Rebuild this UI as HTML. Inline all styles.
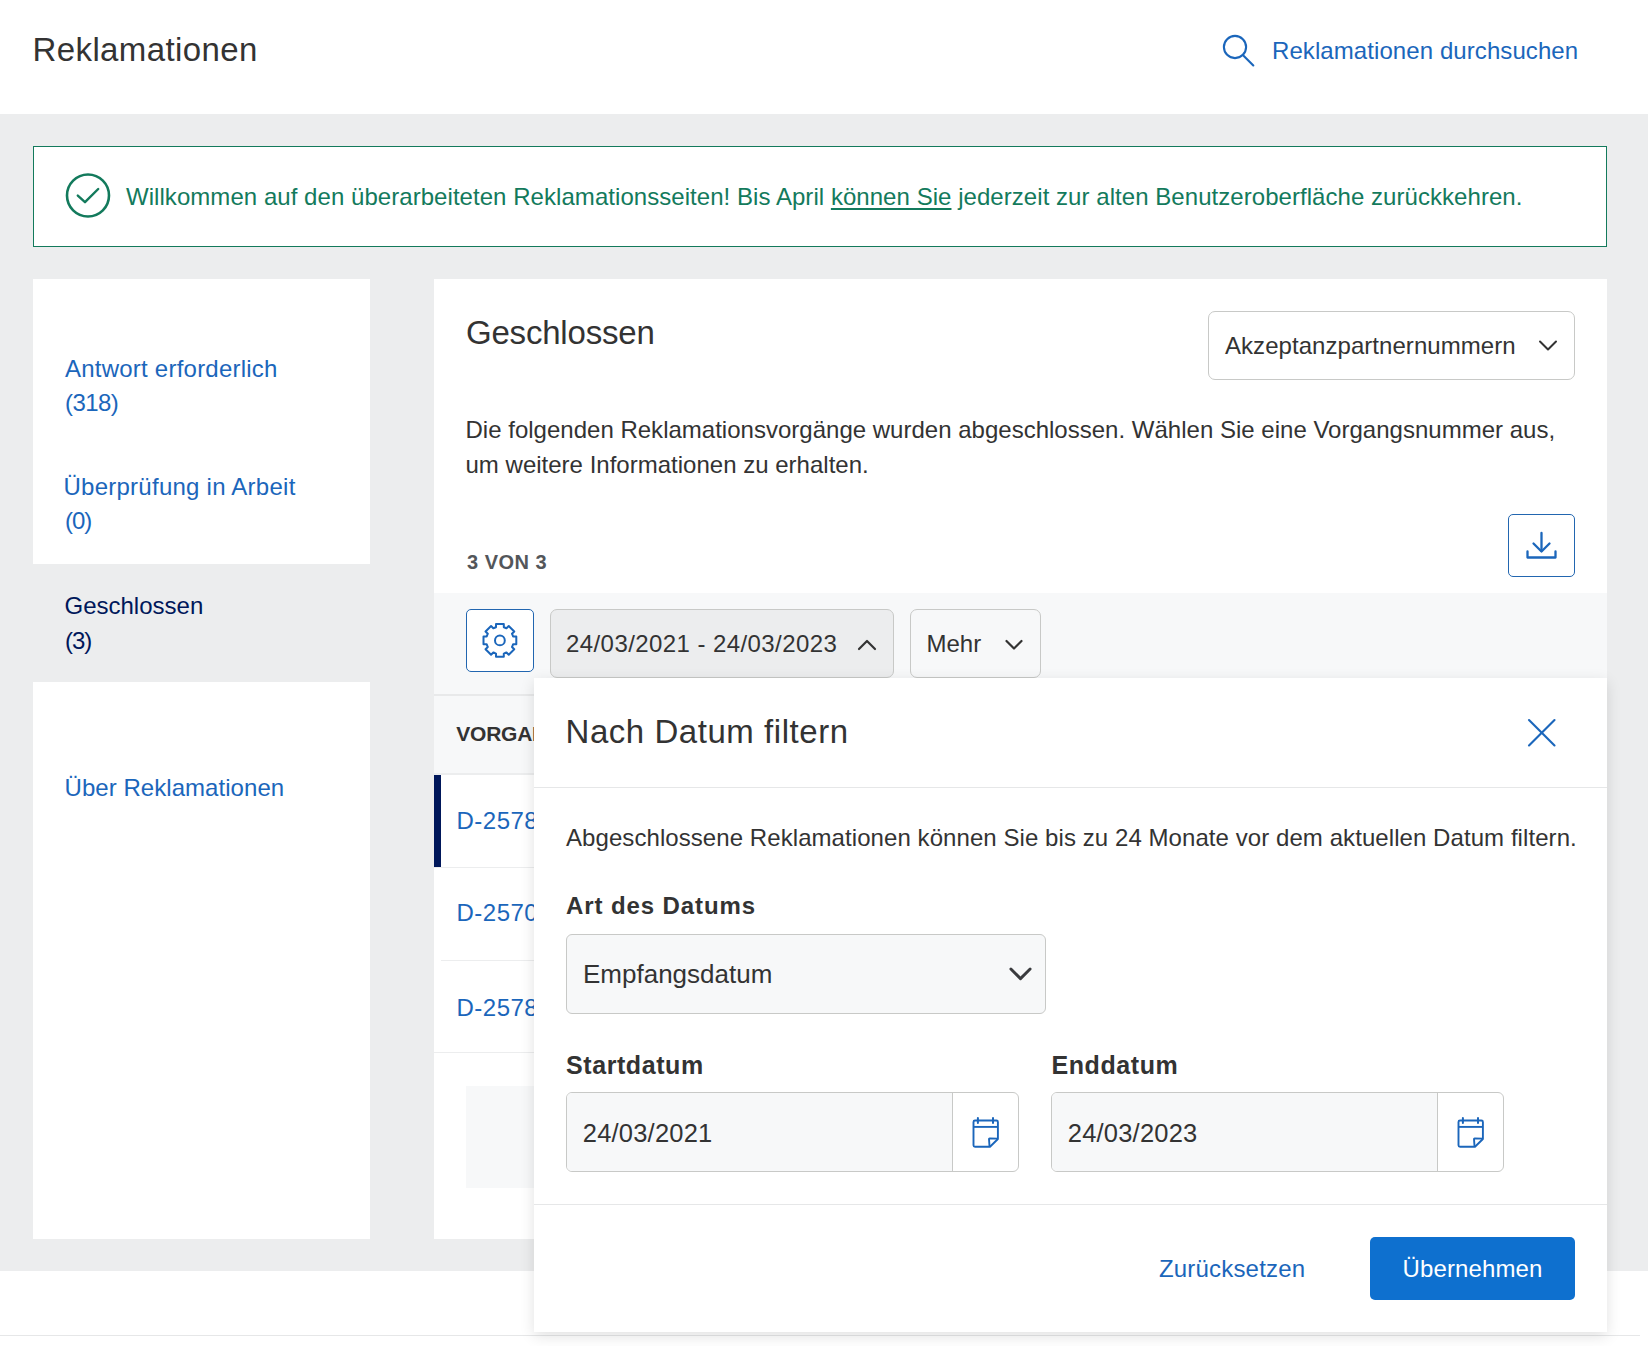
<!DOCTYPE html>
<html><head><meta charset="utf-8"><title>Reklamationen</title>
<style>
html,body{margin:0;padding:0;}
body{width:1648px;height:1346px;position:relative;overflow:hidden;background:#fff;font-family:"Liberation Sans", sans-serif;}
</style></head><body>
<div style="position:absolute;left:32.5px;top:33.07px;font-size:33px;line-height:33px;color:#333333;font-weight:400;letter-spacing:0.4px;white-space:nowrap;">Reklamationen</div>
<svg style="position:absolute;left:1210px;top:25px" width="80" height="55" viewBox="0 0 80 55"><circle cx="25" cy="22" r="11.1" fill="none" stroke="#1b66bb" stroke-width="2.1"/><line x1="32.8" y1="30" x2="43.3" y2="40.5" stroke="#1b66bb" stroke-width="2.1" stroke-linecap="round"/></svg>
<div style="position:absolute;left:1272px;top:39.18px;font-size:24px;line-height:24px;color:#1b66bb;font-weight:400;letter-spacing:0.08px;white-space:nowrap;">Reklamationen durchsuchen</div>
<div style="position:absolute;left:0px;top:114px;width:1648px;height:1157px;background:#ecedee"></div>
<div style="position:absolute;left:0px;top:1335px;width:1640px;height:1px;background:#e6e7e8"></div>
<div style="position:absolute;left:33px;top:146px;width:1574px;height:101px;background:#fff;border:1px solid #137a5c;box-sizing:border-box"></div>
<svg style="position:absolute;left:60px;top:168px" width="56" height="56" viewBox="0 0 56 56"><circle cx="28" cy="27.5" r="21" fill="none" stroke="#137a5c" stroke-width="2.6"/><polyline points="17.8,27.6 25,34.2 38.2,21" fill="none" stroke="#137a5c" stroke-width="2.4" stroke-linecap="round" stroke-linejoin="round"/></svg>
<div style="position:absolute;left:126px;top:184.68px;font-size:24px;line-height:24px;color:#137a5c;font-weight:400;letter-spacing:0.05px;white-space:nowrap;">Willkommen auf den überarbeiteten Reklamationsseiten! Bis April <span style="text-decoration:underline;text-underline-offset:3px;text-decoration-thickness:2px">können Sie</span> jederzeit zur alten Benutzeroberfläche zurückkehren.</div>
<div style="position:absolute;left:33px;top:279px;width:337px;height:285px;background:#fff"></div>
<div style="position:absolute;left:33px;top:682px;width:337px;height:557px;background:#fff"></div>
<div style="position:absolute;left:65px;top:356.88px;font-size:24px;line-height:24px;color:#1b66bb;font-weight:400;letter-spacing:0.23px;white-space:nowrap;">Antwort erforderlich</div>
<div style="position:absolute;left:65px;top:390.78px;font-size:24px;line-height:24px;color:#1b66bb;font-weight:400;letter-spacing:-0.6px;white-space:nowrap;">(318)</div>
<div style="position:absolute;left:63.5px;top:474.68px;font-size:24px;line-height:24px;color:#1b66bb;font-weight:400;letter-spacing:0.25px;white-space:nowrap;">Überprüfung in Arbeit</div>
<div style="position:absolute;left:65px;top:509.28px;font-size:24px;line-height:24px;color:#1b66bb;font-weight:400;letter-spacing:-1px;white-space:nowrap;">(0)</div>
<div style="position:absolute;left:64.5px;top:593.68px;font-size:24px;line-height:24px;color:#00175a;font-weight:400;letter-spacing:0px;white-space:nowrap;">Geschlossen</div>
<div style="position:absolute;left:65px;top:628.78px;font-size:24px;line-height:24px;color:#00175a;font-weight:400;letter-spacing:-1px;white-space:nowrap;">(3)</div>
<div style="position:absolute;left:64.5px;top:776.28px;font-size:24px;line-height:24px;color:#1b66bb;font-weight:400;letter-spacing:0.05px;white-space:nowrap;">Über Reklamationen</div>
<div style="position:absolute;left:434px;top:279px;width:1173px;height:960px;background:#fff"></div>
<div style="position:absolute;left:466px;top:316.27px;font-size:33px;line-height:33px;color:#333333;font-weight:400;letter-spacing:-0.2px;white-space:nowrap;">Geschlossen</div>
<div style="position:absolute;left:1208px;top:311px;width:367px;height:69px;border:1px solid #c8c9c7;border-radius:7px;box-sizing:border-box;background:#fff"></div>
<div style="position:absolute;left:1225px;top:333.58px;font-size:24px;line-height:24px;color:#333333;font-weight:400;letter-spacing:0.05px;white-space:nowrap;">Akzeptanzpartnernummern</div>
<svg style="position:absolute;left:1536px;top:336px" width="24" height="20" viewBox="0 0 24 20"><polyline points="4,5.5 12,13.5 20,5.5" fill="none" stroke="#333333" stroke-width="2" stroke-linecap="round" stroke-linejoin="round"/></svg>
<div style="position:absolute;left:465.5px;top:417.78px;font-size:24px;line-height:24px;color:#333333;font-weight:400;letter-spacing:0.01px;white-space:nowrap;">Die folgenden Reklamationsvorgänge wurden abgeschlossen. Wählen Sie eine Vorgangsnummer aus,</div>
<div style="position:absolute;left:465.5px;top:452.88px;font-size:24px;line-height:24px;color:#333333;font-weight:400;letter-spacing:0.01px;white-space:nowrap;">um weitere Informationen zu erhalten.</div>
<div style="position:absolute;left:467px;top:551.67px;font-size:20px;line-height:20px;color:#53565a;font-weight:700;letter-spacing:0.5px;white-space:nowrap;">3 VON 3</div>
<div style="position:absolute;left:1508px;top:514px;width:67px;height:63px;border:1.3px solid #2266b0;border-radius:5px;box-sizing:border-box;background:#fff"></div>
<svg style="position:absolute;left:1518px;top:524px" width="48" height="44" viewBox="0 0 48 44"><line x1="23.5" y1="9" x2="23.5" y2="27" stroke="#1b66bb" stroke-width="2.3" stroke-linecap="round"/><polyline points="15.5,19.5 23.5,27.5 31.5,19.5" fill="none" stroke="#1b66bb" stroke-width="2.3" stroke-linecap="round" stroke-linejoin="round"/><polyline points="9.5,27.5 9.5,33.5 37.5,33.5 37.5,27.5" fill="none" stroke="#1b66bb" stroke-width="2.3" stroke-linecap="round" stroke-linejoin="round"/></svg>
<div style="position:absolute;left:434px;top:593px;width:1173px;height:102px;background:#f7f8f9"></div>
<div style="position:absolute;left:434px;top:694px;width:1173px;height:2px;background:#e8e9ea"></div>
<div style="position:absolute;left:466px;top:609px;width:68px;height:63px;border:1.3px solid #2266b0;border-radius:5px;box-sizing:border-box;background:#fff"></div>
<svg style="position:absolute;left:476px;top:616px" width="48" height="48" viewBox="0 0 48 48"><path d="M20.00,11.20 L20.00,8.00 L27.80,8.00 L27.80,11.20 A13.76,13.76 0 0 1 30.48,12.31 L32.74,10.05 L38.25,15.56 L35.99,17.82 A13.76,13.76 0 0 1 37.10,20.50 L40.30,20.50 L40.30,28.30 L37.10,28.30 A13.76,13.76 0 0 1 35.99,30.98 L38.25,33.24 L32.74,38.75 L30.48,36.49 A13.76,13.76 0 0 1 27.80,37.60 L27.80,40.80 L20.00,40.80 L20.00,37.60 A13.76,13.76 0 0 1 17.32,36.49 L15.06,38.75 L9.55,33.24 L11.81,30.98 A13.76,13.76 0 0 1 10.70,28.30 L7.50,28.30 L7.50,20.50 L10.70,20.50 A13.76,13.76 0 0 1 11.81,17.82 L9.55,15.56 L15.06,10.05 L17.32,12.31 A13.76,13.76 0 0 1 20.00,11.20 Z" fill="none" stroke="#1b66bb" stroke-width="2" stroke-linejoin="round"/><circle cx="23.9" cy="24.4" r="4.9" fill="none" stroke="#1b66bb" stroke-width="2"/></svg>
<div style="position:absolute;left:550px;top:609px;width:344px;height:69px;border:1px solid #c8c9c7;border-radius:7px;box-sizing:border-box;background:#ecedee"></div>
<div style="position:absolute;left:566px;top:632.08px;font-size:24px;line-height:24px;color:#333333;font-weight:400;letter-spacing:0.42px;white-space:nowrap;">24/03/2021 - 24/03/2023</div>
<svg style="position:absolute;left:852px;top:632px" width="30" height="24" viewBox="0 0 30 24"><polyline points="7,17 15,9 23,17" fill="none" stroke="#333333" stroke-width="2.2" stroke-linecap="round" stroke-linejoin="round"/></svg>
<div style="position:absolute;left:910px;top:609px;width:131px;height:69px;border:1px solid #c8c9c7;border-radius:7px;box-sizing:border-box;background:#f7f8f9"></div>
<div style="position:absolute;left:926.5px;top:632.08px;font-size:24px;line-height:24px;color:#333333;font-weight:400;letter-spacing:0px;white-space:nowrap;">Mehr</div>
<svg style="position:absolute;left:1000px;top:632px" width="30" height="24" viewBox="0 0 30 24"><polyline points="6.5,9 14,16.5 21.5,9" fill="none" stroke="#333333" stroke-width="2.2" stroke-linecap="round" stroke-linejoin="round"/></svg>
<div style="position:absolute;left:434px;top:696px;width:1173px;height:78px;background:#f7f8f9"></div>
<div style="position:absolute;left:434px;top:773px;width:1173px;height:2px;background:#ecedee"></div>
<div style="position:absolute;left:456.3px;top:722.92px;font-size:21px;line-height:21px;color:#333333;font-weight:700;letter-spacing:-0.25px;white-space:nowrap;">VORGANGSNUMMER</div>
<div style="position:absolute;left:434px;top:775px;width:7px;height:93px;background:#00175a"></div>
<div style="position:absolute;left:456.5px;top:808.88px;font-size:24px;line-height:24px;color:#1b66bb;font-weight:400;letter-spacing:0.5px;white-space:nowrap;">D-2578143</div>
<div style="position:absolute;left:434px;top:867px;width:1173px;height:1px;background:#ecedee"></div>
<div style="position:absolute;left:456.5px;top:901.38px;font-size:24px;line-height:24px;color:#1b66bb;font-weight:400;letter-spacing:0.5px;white-space:nowrap;">D-2570981</div>
<div style="position:absolute;left:441px;top:960px;width:1166px;height:1px;background:#ecedee"></div>
<div style="position:absolute;left:456.5px;top:995.78px;font-size:24px;line-height:24px;color:#1b66bb;font-weight:400;letter-spacing:0.5px;white-space:nowrap;">D-2578112</div>
<div style="position:absolute;left:434px;top:1052px;width:1173px;height:1px;background:#ecedee"></div>
<div style="position:absolute;left:466px;top:1086px;width:1109px;height:102px;background:#f7f8f9"></div>
<div style="position:absolute;left:534px;top:678px;width:1073px;height:654px;background:#fff;box-shadow:0 4px 14px rgba(0,0,0,0.12)"></div>
<div style="position:absolute;left:565.5px;top:714.77px;font-size:33px;line-height:33px;color:#333333;font-weight:400;letter-spacing:0.55px;white-space:nowrap;">Nach Datum filtern</div>
<svg style="position:absolute;left:1518px;top:709px" width="48" height="48" viewBox="0 0 48 48"><line x1="11" y1="11" x2="36.5" y2="36.5" stroke="#1b66bb" stroke-width="2.1" stroke-linecap="round"/><line x1="36.5" y1="11" x2="11" y2="36.5" stroke="#1b66bb" stroke-width="2.1" stroke-linecap="round"/></svg>
<div style="position:absolute;left:534px;top:787px;width:1073px;height:1px;background:#e6e7e8"></div>
<div style="position:absolute;left:566px;top:825.68px;font-size:24px;line-height:24px;color:#333333;font-weight:400;letter-spacing:0.07px;white-space:nowrap;">Abgeschlossene Reklamationen können Sie bis zu 24 Monate vor dem aktuellen Datum filtern.</div>
<div style="position:absolute;left:566px;top:894.28px;font-size:24px;line-height:24px;color:#333333;font-weight:700;letter-spacing:0.9px;white-space:nowrap;">Art des Datums</div>
<div style="position:absolute;left:566px;top:934px;width:480px;height:80px;border:1px solid #c8c9c7;border-radius:6px;box-sizing:border-box;background:#f7f8f9"></div>
<div style="position:absolute;left:583px;top:961.39px;font-size:26px;line-height:26px;color:#333333;font-weight:400;letter-spacing:0px;white-space:nowrap;">Empfangsdatum</div>
<svg style="position:absolute;left:1000px;top:956px" width="40" height="36" viewBox="0 0 40 36"><polyline points="10.9,13 20.5,22.6 30.1,13" fill="none" stroke="#3a3b3e" stroke-width="2.9" stroke-linecap="round" stroke-linejoin="round"/></svg>
<div style="position:absolute;left:566px;top:1052.94px;font-size:25px;line-height:25px;color:#333333;font-weight:700;letter-spacing:0.58px;white-space:nowrap;">Startdatum</div>
<div style="position:absolute;left:1051.5px;top:1052.94px;font-size:25px;line-height:25px;color:#333333;font-weight:700;letter-spacing:0.58px;white-space:nowrap;">Enddatum</div>
<div style="position:absolute;left:566px;top:1092px;width:453px;height:80px;border:1px solid #c8c9c7;border-radius:6px;box-sizing:border-box;background:#fff;overflow:hidden"></div>
<div style="position:absolute;left:567px;top:1093px;width:385px;height:78px;background:#f7f8f9;border-radius:5px 0 0 5px"></div>
<div style="position:absolute;left:952px;top:1093px;width:1px;height:78px;background:#c8c9c7"></div>
<div style="position:absolute;left:582.8px;top:1121.41px;font-size:25.5px;line-height:25.5px;color:#333333;font-weight:400;letter-spacing:0.2px;white-space:nowrap;">24/03/2021</div>
<svg style="position:absolute;left:962px;top:1108px" width="48" height="48" viewBox="0 0 48 48"><path d="M28,38.8 L13,38.8 Q11.5,38.8 11.5,37.3 L11.5,14 Q11.5,12.5 13,12.5 L34.4,12.5 Q35.9,12.5 35.9,14 L35.9,31 Z" fill="none" stroke="#1b66bb" stroke-width="1.9" stroke-linejoin="round"/><line x1="11.5" y1="18.9" x2="35.9" y2="18.9" stroke="#1b66bb" stroke-width="1.9"/><line x1="15.9" y1="10" x2="15.9" y2="15" stroke="#1b66bb" stroke-width="2" stroke-linecap="round"/><line x1="31" y1="10" x2="31" y2="15" stroke="#1b66bb" stroke-width="2" stroke-linecap="round"/><path d="M27.5,38 L27,31 Q27,30.4 27.6,30.4 L35.5,30.6" fill="none" stroke="#1b66bb" stroke-width="1.9" stroke-linejoin="round"/></svg>
<div style="position:absolute;left:1051px;top:1092px;width:453px;height:80px;border:1px solid #c8c9c7;border-radius:6px;box-sizing:border-box;background:#fff;overflow:hidden"></div>
<div style="position:absolute;left:1052px;top:1093px;width:385px;height:78px;background:#f7f8f9;border-radius:5px 0 0 5px"></div>
<div style="position:absolute;left:1437px;top:1093px;width:1px;height:78px;background:#c8c9c7"></div>
<div style="position:absolute;left:1067.8px;top:1121.41px;font-size:25.5px;line-height:25.5px;color:#333333;font-weight:400;letter-spacing:0.2px;white-space:nowrap;">24/03/2023</div>
<svg style="position:absolute;left:1447px;top:1108px" width="48" height="48" viewBox="0 0 48 48"><path d="M28,38.8 L13,38.8 Q11.5,38.8 11.5,37.3 L11.5,14 Q11.5,12.5 13,12.5 L34.4,12.5 Q35.9,12.5 35.9,14 L35.9,31 Z" fill="none" stroke="#1b66bb" stroke-width="1.9" stroke-linejoin="round"/><line x1="11.5" y1="18.9" x2="35.9" y2="18.9" stroke="#1b66bb" stroke-width="1.9"/><line x1="15.9" y1="10" x2="15.9" y2="15" stroke="#1b66bb" stroke-width="2" stroke-linecap="round"/><line x1="31" y1="10" x2="31" y2="15" stroke="#1b66bb" stroke-width="2" stroke-linecap="round"/><path d="M27.5,38 L27,31 Q27,30.4 27.6,30.4 L35.5,30.6" fill="none" stroke="#1b66bb" stroke-width="1.9" stroke-linejoin="round"/></svg>
<div style="position:absolute;left:534px;top:1204px;width:1073px;height:1px;background:#e6e7e8"></div>
<div style="position:absolute;left:1159px;top:1256.88px;font-size:24px;line-height:24px;color:#1b66bb;font-weight:400;letter-spacing:0.18px;white-space:nowrap;">Zurücksetzen</div>
<div style="position:absolute;left:1370px;top:1237px;width:205px;height:63px;background:#0e70cf;border-radius:5px"></div>
<div style="position:absolute;left:1402.5px;top:1256.88px;font-size:24px;line-height:24px;color:#ffffff;font-weight:400;letter-spacing:0.12px;white-space:nowrap;">Übernehmen</div>
</body></html>
